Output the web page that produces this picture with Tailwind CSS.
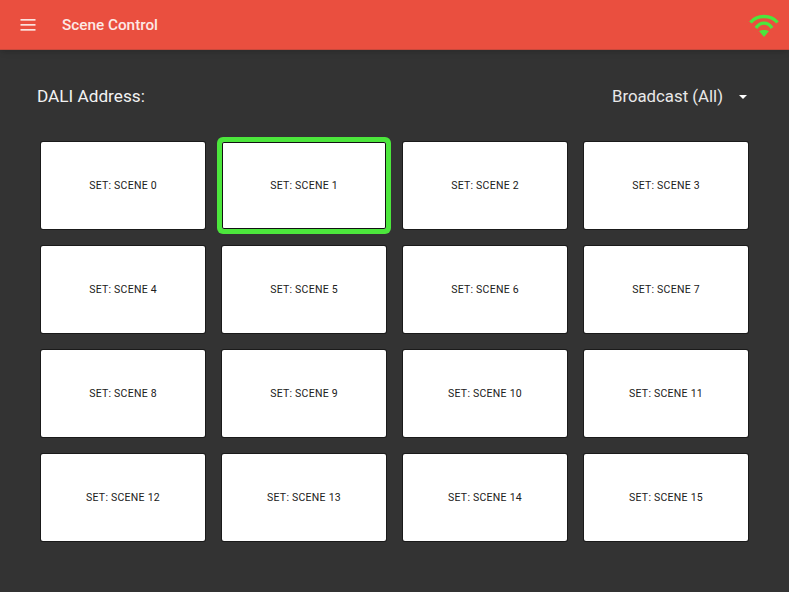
<!DOCTYPE html>
<html lang="en">
<head>
    <meta charset="UTF-8">
    <meta name="viewport" content="width=device-width, initial-scale=1.0">
    <title>Scene Control</title>
    <script src="https://cdn.jsdelivr.net/npm/@tailwindcss/browser@4"></script>
</head>
<body class="h-[592px] overflow-hidden bg-[#333333] font-['Roboto',sans-serif]">
    <header class="h-[50px] bg-[#ea4f3f] border-b border-[#c9493b] flex items-center pl-5 pr-[10px] shadow-md">
        <svg class="w-4 h-[14px] mr-[18px] text-[#fbe3df]" viewBox="0 0 16 14" fill="currentColor">
            <rect x="0.5" y="1" width="15" height="1.7"/>
            <rect x="0.5" y="6" width="15" height="1.7"/>
            <rect x="0.5" y="11" width="15" height="1.7"/>
        </svg>
        <h1 class="ml-2 mt-[3px] text-[15.3px] font-medium text-[#fde9e6] leading-none">Scene Control</h1>
        <svg class="ml-auto w-[30px] h-[24px] text-[#4ce63c]" viewBox="0 0 30 24" fill="none" stroke="currentColor" stroke-width="3.4">
            <path d="M1.5 9.5 C8 1.5 22 1.5 28.5 9.5"/>
            <path d="M7 15 C11 8.5 19 8.5 23 15"/>
            <path d="M10 18 L15 24 L20 18 C17.5 16.5 12.5 16.5 10 18 Z" fill="currentColor" stroke="none"/>
        </svg>
    </header>

    <main class="pl-[41px] pr-[41px]">
        <div class="flex items-center justify-between h-[46px] mt-[24px] -ml-[4px] mb-[22px]">
            <span class="text-[17.2px] text-[#f2f2f2]">DALI Address:</span>
            <div class="flex items-center">
                <span class="text-[16.8px] text-[#e8e8e8]">Broadcast (All)</span>
                <span class="ml-[16px] mr-px w-0 h-0 border-x-[4px] border-x-transparent border-t-[4px] border-t-white"></span>
            </div>
        </div>

        <div class="grid grid-cols-4 gap-x-[17px] gap-y-[17px] text-[10.5px] text-[#202020] tracking-[0.25px]">
            <button class="h-[87px] bg-white rounded-[2px] shadow-[0_0_0_1px_#1a1a1a]">SET: SCENE 0</button>
            <button class="h-[87px] bg-white rounded-[2px] shadow-[inset_0_0_0_1px_#111,0_0_0_5px_#4ce63c]">SET: SCENE 1</button>
            <button class="h-[87px] bg-white rounded-[2px] shadow-[0_0_0_1px_#1a1a1a]">SET: SCENE 2</button>
            <button class="h-[87px] bg-white rounded-[2px] shadow-[0_0_0_1px_#1a1a1a]">SET: SCENE 3</button>
            <button class="h-[87px] bg-white rounded-[2px] shadow-[0_0_0_1px_#1a1a1a]">SET: SCENE 4</button>
            <button class="h-[87px] bg-white rounded-[2px] shadow-[0_0_0_1px_#1a1a1a]">SET: SCENE 5</button>
            <button class="h-[87px] bg-white rounded-[2px] shadow-[0_0_0_1px_#1a1a1a]">SET: SCENE 6</button>
            <button class="h-[87px] bg-white rounded-[2px] shadow-[0_0_0_1px_#1a1a1a]">SET: SCENE 7</button>
            <button class="h-[87px] bg-white rounded-[2px] shadow-[0_0_0_1px_#1a1a1a]">SET: SCENE 8</button>
            <button class="h-[87px] bg-white rounded-[2px] shadow-[0_0_0_1px_#1a1a1a]">SET: SCENE 9</button>
            <button class="h-[87px] bg-white rounded-[2px] shadow-[0_0_0_1px_#1a1a1a]">SET: SCENE 10</button>
            <button class="h-[87px] bg-white rounded-[2px] shadow-[0_0_0_1px_#1a1a1a]">SET: SCENE 11</button>
            <button class="h-[87px] bg-white rounded-[2px] shadow-[0_0_0_1px_#1a1a1a]">SET: SCENE 12</button>
            <button class="h-[87px] bg-white rounded-[2px] shadow-[0_0_0_1px_#1a1a1a]">SET: SCENE 13</button>
            <button class="h-[87px] bg-white rounded-[2px] shadow-[0_0_0_1px_#1a1a1a]">SET: SCENE 14</button>
            <button class="h-[87px] bg-white rounded-[2px] shadow-[0_0_0_1px_#1a1a1a]">SET: SCENE 15</button>
        </div>
    </main>
</body>
</html>
